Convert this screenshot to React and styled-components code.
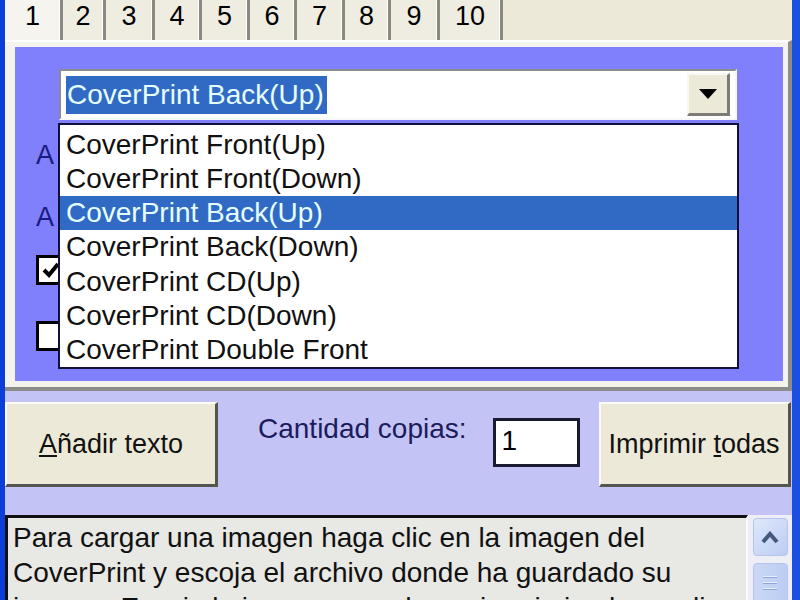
import React from "react";
import styled, { createGlobalStyle } from "styled-components";

const GlobalStyle = createGlobalStyle`
  html, body {
    margin: 0;
    padding: 0;
    background: #c3c3f6;
  }
  * {
    box-sizing: border-box;
  }
`;

const tabs = [
  { label: "1", width: 58 },
  { label: "2", width: 43 },
  { label: "3", width: 49 },
  { label: "4", width: 47 },
  { label: "5", width: 48 },
  { label: "6", width: 47 },
  { label: "7", width: 48 },
  { label: "8", width: 46 },
  { label: "9", width: 49 },
  { label: "10", width: 63 },
];

const options = [
  "CoverPrint Front(Up)",
  "CoverPrint Front(Down)",
  "CoverPrint Back(Up)",
  "CoverPrint Back(Down)",
  "CoverPrint CD(Up)",
  "CoverPrint CD(Down)",
  "CoverPrint Double Front",
];

const selected = 2;

const Window = styled.div`
  width: 800px;
  height: 600px;
  overflow: hidden;
  display: flex;
  flex-direction: column;
  background: #c3c3f6;
  border-left: 5px solid #0b3ed8;
  border-right: 8px solid #1a4fe0;
  font-family: "Liberation Sans", Arial, sans-serif;
  font-size: 27px;
  color: #000;
`;

const TabStrip = styled.div`
  height: 40px;
  flex: none;
  display: flex;
  background: #ece9d8;
`;

const Tab = styled.div`
  height: 40px;
  display: flex;
  justify-content: center;
  padding-top: 1px;
  line-height: 30px;
  background: ${(p) => (p.active ? "#f5f4ee" : "#efede2")};
  border-right: 3px solid #8a8a80;
  box-shadow: inset -1px 0 0 #ffffff;
`;

const TabPage = styled.div`
  height: 351px;
  flex: none;
  display: flex;
  padding: 5px 5px 6px 10px;
  background: #f4f3ee;
  border-top: 2px solid #ffffff;
  border-right: 4px solid #8c8c88;
  border-bottom: 4px solid #8c8c88;
`;

const Panel = styled.div`
  flex: 1;
  position: relative;
  background: #8080fc;
  padding: 22px 0 0 21px;
  display: flex;
  flex-direction: column;
`;

const Combo = styled.div`
  margin-left: 23px;
  width: 678px;
  height: 51px;
  display: flex;
  align-items: center;
  padding: 3px 5px 3px 5px;
  background: #ffffff;
  border-top: 2px solid #8c8c8c;
  border-left: 2px solid #8c8c8c;
  border-right: 2px solid #f8f8f8;
  border-bottom: 2px solid #f8f8f8;
  font-size: 28px;
`;

const ComboText = styled.div`
  flex: 1;
  display: flex;
`;

const Selection = styled.span`
  background: #316ac5;
  color: #e6ffff;
  padding: 1px 3px 2px 1px;
  line-height: 35px;
`;

const DropButton = styled.div`
  width: 43px;
  height: 43px;
  display: flex;
  align-items: center;
  justify-content: center;
  background: #ece9d8;
  border-top: 2px solid #f8f8f4;
  border-left: 2px solid #f8f8f4;
  border-right: 3px solid #7c7c74;
  border-bottom: 3px solid #7c7c74;
`;

const Arrow = styled.div`
  width: 0;
  height: 0;
  border-left: 9px solid transparent;
  border-right: 9px solid transparent;
  border-top: 10px solid #000;
`;

/* labels and checks sit behind the open list; only their left edge shows */
const Fields = styled.div`
  width: 24px;
  overflow: hidden;
  display: flex;
  flex-direction: column;
  color: #1a1a80;
`;

const FieldLabel = styled.div`
  margin-top: ${(p) => p.gap}px;
  line-height: 30px;
  white-space: nowrap;
`;

const CheckBox = styled.div`
  margin-top: ${(p) => p.gap}px;
  width: 30px;
  height: 30px;
  flex: none;
  background: #ffffff;
  border: 3px solid #000;
  display: flex;
  align-items: center;
  justify-content: center;
`;

const DropList = styled.div`
  position: absolute;
  left: 43px;
  top: 76px;
  width: 681px;
  height: 246px;
  background: #ffffff;
  border: 2px solid #10103a;
  padding-top: 3px;
  display: flex;
  flex-direction: column;
  font-size: 28px;
`;

const Option = styled.div`
  height: 34.3px;
  line-height: 34px;
  padding-left: 6px;
  white-space: nowrap;
  background: ${(p) => (p.active ? "#316ac5" : "transparent")};
  color: ${(p) => (p.active ? "#e6ffff" : "#111")};
`;

const ButtonRow = styled.div`
  height: 124px;
  flex: none;
  display: flex;
  align-items: flex-start;
  padding-top: 11px;
`;

const Button = styled.div`
  width: ${(p) => p.width}px;
  height: 85px;
  display: flex;
  align-items: center;
  justify-content: center;
  background: #ece9d8;
  color: #111;
  border-top: 2px solid #fbfbf6;
  border-left: 2px solid #fbfbf6;
  border-right: 3px solid #55554f;
  border-bottom: 3px solid #55554f;
`;

const CopiesLabel = styled.div`
  margin: 10px 0 0 40px;
  font-size: 28px;
  line-height: 34px;
  color: #1c1c5c;
`;

const CopiesInput = styled.div`
  margin: 16px 19px 0 26px;
  width: 87px;
  height: 49px;
  background: #ffffff;
  border: 3px solid #1a1a30;
  padding-left: 6px;
  line-height: 40px;
  font-size: 28px;
`;

const Bottom = styled.div`
  flex: 1;
  display: flex;
`;

const Notes = styled.div`
  width: 743px;
  background: #e8e8e4;
  border-top: 3px solid #101010;
  border-left: 3px solid #101010;
  border-right: 2px solid #fafafa;
  padding: 2px 0 0 5px;
  font-size: 28px;
  line-height: 35px;
  color: #111;
  overflow: hidden;
`;

const ScrollBar = styled.div`
  flex: 1;
  display: flex;
  flex-direction: column;
  align-items: center;
  gap: 7px;
  padding-top: 3px;
  background: #eeeef6;
`;

const ScrollButton = styled.div`
  width: 35px;
  height: 38px;
  border-radius: 4px;
  display: flex;
  align-items: center;
  justify-content: center;
  background: linear-gradient(135deg, #dfe8fb, #bccdf3);
  border: 1px solid #b4c4ec;
`;

const Thumb = styled.div`
  width: 35px;
  flex: 1;
  border-radius: 4px 4px 0 0;
  padding-top: 12px;
  display: flex;
  flex-direction: column;
  align-items: center;
  gap: 4px;
  background: linear-gradient(90deg, #cad8f6, #bccdf3);
  border: 1px solid #b4c4ec;
`;

const Grip = styled.div`
  width: 14px;
  height: 2px;
  background: #e8eefc;
  border-bottom: 1px solid #90a6d8;
`;

export default function App() {
  return (
    <>
      <GlobalStyle />
      <Window>
        <TabStrip>
          {tabs.map((t, i) => (
            <Tab key={t.label} active={i === 0} style={{ width: t.width }}>
              {t.label}
            </Tab>
          ))}
        </TabStrip>
        <TabPage>
          <Panel>
            <Combo>
              <ComboText>
                <Selection>{options[selected]}</Selection>
              </ComboText>
              <DropButton>
                <Arrow />
              </DropButton>
            </Combo>
            <Fields>
              <FieldLabel gap={20}>A</FieldLabel>
              <FieldLabel gap={32}>A</FieldLabel>
              <CheckBox gap={23}>
                <svg width="18" height="16" viewBox="0 0 18 16">
                  <path d="M2 8 L7 13 L16 2" stroke="#000" strokeWidth="4" fill="none" />
                </svg>
              </CheckBox>
              <CheckBox gap={36} />
            </Fields>
            <DropList>
              {options.map((o, i) => (
                <Option key={o} active={i === selected}>
                  {o}
                </Option>
              ))}
            </DropList>
          </Panel>
        </TabPage>
        <ButtonRow>
          <Button width={213}>
            <span>
              <u>A</u>ñadir texto
            </span>
          </Button>
          <CopiesLabel>Cantidad copias:</CopiesLabel>
          <CopiesInput>1</CopiesInput>
          <Button width={192}>
            <span>
              Imprimir <u>t</u>odas
            </span>
          </Button>
        </ButtonRow>
        <Bottom>
          <Notes>
            Para cargar una imagen haga clic en la imagen del
            <br />
            CoverPrint y escoja el archivo donde ha guardado su
            <br />
            imagen. Escoja la imagen que desea imprimir y haga clic
          </Notes>
          <ScrollBar>
            <ScrollButton>
              <svg width="18" height="13" viewBox="0 0 18 13">
                <path d="M2 11 L9 3 L16 11" stroke="#43577f" strokeWidth="4" fill="none" />
              </svg>
            </ScrollButton>
            <Thumb>
              <Grip />
              <Grip />
              <Grip />
            </Thumb>
          </ScrollBar>
        </Bottom>
      </Window>
    </>
  );
}
